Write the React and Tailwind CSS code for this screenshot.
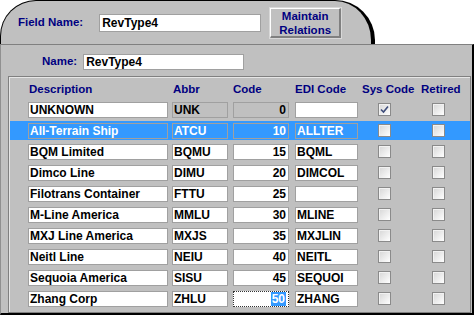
import React from 'react';

const rows = [
  { desc: 'UNKNOWN', abbr: 'UNK', code: '0', edi: '', sys: true, locked: true },
  { desc: 'All-Terrain Ship', abbr: 'ATCU', code: '10', edi: 'ALLTER', selected: true },
  { desc: 'BQM Limited', abbr: 'BQMU', code: '15', edi: 'BQML' },
  { desc: 'Dimco Line', abbr: 'DIMU', code: '20', edi: 'DIMCOL' },
  { desc: 'Filotrans Container', abbr: 'FTTU', code: '25', edi: '' },
  { desc: 'M-Line America', abbr: 'MMLU', code: '30', edi: 'MLINE' },
  { desc: 'MXJ Line America', abbr: 'MXJS', code: '35', edi: 'MXJLIN' },
  { desc: 'Neitl Line', abbr: 'NEIU', code: '40', edi: 'NEITL' },
  { desc: 'Sequoia America', abbr: 'SISU', code: '45', edi: 'SEQUOI' },
  { desc: 'Zhang Corp', abbr: 'ZHLU', code: '50', edi: 'ZHANG', focus: true },
];

const Cell = ({ children, width, selected, locked, right, focus }) => {
  const bg = selected ? 'bg-[#3399ff] text-white' : locked ? 'bg-[#c0c0c0] text-black' : 'bg-white text-black';
  const border = focus ? 'border border-dotted border-[#333]' : 'border border-[#a0a0a0]';
  return (
    <div
      className={`${bg} ${border} h-4 mt-[2px] px-[1px] text-[12px] leading-[14px] font-bold whitespace-nowrap overflow-hidden flex items-center ${right ? 'justify-end pr-[2px]' : ''}`}
      style={{ width }}
    >
      {children}
    </div>
  );
};

const Check = ({ checked, className }) => (
  <div className={`w-[13px] h-[13px] mt-[3px] border border-[#8a8a8a] bg-gradient-to-br from-[#d6d6d6] to-white shadow-[inset_1px_1px_0_#f2f2f2] flex items-center justify-center ${className}`}>
    {checked && (
      <svg width="9" height="9" viewBox="0 0 9 9">
        <path d="M1 4.5 L3.5 7 L8 1.5" fill="none" stroke="#3d4c7a" strokeWidth="1.6" />
      </svg>
    )}
  </div>
);

export default function App() {
  return (
    <div className="w-[474px] h-[315px] bg-white flex flex-col overflow-hidden" style={{ fontFamily: '"Liberation Sans", Arial, sans-serif' }}>
      {/* top tab */}
      <div className="w-[375px] h-[44px] shrink-0 bg-[#c0c0c0] border-t border-l border-r-4 border-black rounded-tl-[36px] rounded-tr-[40px] flex items-center">
        <span className="ml-[17px] text-[11.5px] font-bold text-[#000080]">Field Name:</span>
        <div className="ml-[16px] w-[162px] h-[18px] bg-white border border-[#a0a0a0] text-[12px] font-bold pl-[2px] flex items-center">RevType4</div>
        <button className="ml-[9px] w-[71px] h-[30px] bg-[#c0c0c0] border-t border-l border-white border-b-2 border-r-2 border-b-[#808080] border-r-[#808080] shadow-[0_0_0_1px_#d8d8d8] text-[11.5px] leading-[14px] font-bold text-[#000080]">
          Maintain<br />Relations
        </button>
      </div>

      {/* lower section */}
      <div className="flex-1 flex flex-col bg-[#c0c0c0] border-t border-[#808080] border-l border-l-[#909090] border-r-2 border-r-black border-b-2 border-b-black">
        <div className="flex items-center h-4 mt-[9px]">
          <span className="ml-[41px] text-[11.5px] font-bold text-[#000080]">Name:</span>
          <div className="ml-[6px] w-[161px] h-4 bg-white border border-[#a0a0a0] text-[12px] font-bold pl-[2px] flex items-center">RevType4</div>
        </div>

        <div className="flex-1 ml-[7px] mr-px mt-[6px] border border-[#808080] shadow-[inset_1px_1px_0_#e6e6e6] pt-[6px]">
          <div className="grid grid-cols-[144px_61px_62px_67px_59px_60px] pl-[19px] h-[17px] text-[11.5px] font-bold text-[#000080] leading-[13px]">
            <span className="pl-px">Description</span>
            <span className="pl-px">Abbr</span>
            <span>Code</span>
            <span>EDI Code</span>
            <span>Sys Code</span>
            <span>Retired</span>
          </div>
          {rows.map((r) => (
            <div key={r.desc} className={`h-[19px] mb-[2px] ml-px grid grid-cols-[144px_61px_62px_67px_59px_60px] pl-[18px] ${r.selected ? 'bg-[#3399ff]' : ''}`}>
              <Cell width={140} selected={r.selected}>{r.desc}</Cell>
              <Cell width={56} selected={r.selected} locked={r.locked}>{r.abbr}</Cell>
              <Cell width={56} selected={r.selected} locked={r.locked} right focus={r.focus}>
                {r.focus ? <span className="bg-[#3399ff] text-white px-px">{r.code}</span> : r.code}
              </Cell>
              <Cell width={63} selected={r.selected}>{r.edi}</Cell>
              <Check checked={r.sys} className="ml-[16px]" />
              <Check className="ml-[11px]" />
            </div>
          ))}
        </div>
      </div>
    </div>
  );
}
